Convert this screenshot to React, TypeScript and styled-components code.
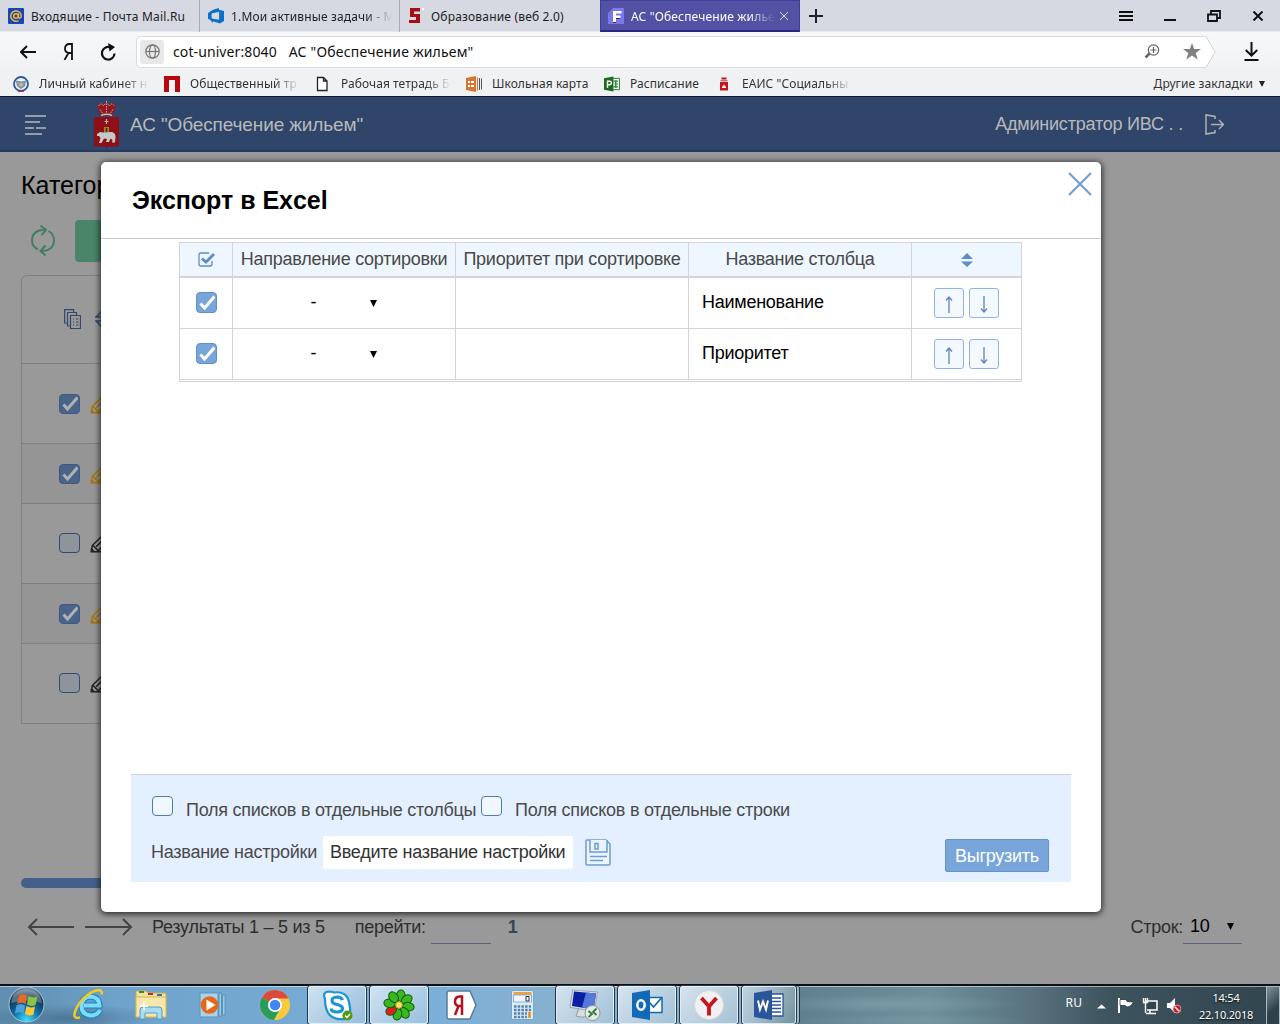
import React from "react";
import styled, { createGlobalStyle, css } from "styled-components";

const UI = `"Noto Sans", "Open Sans", sans-serif`;
const APP = `"Liberation Sans", Arial, sans-serif`;

const GlobalStyle = createGlobalStyle`
  * { box-sizing: border-box; }
  html, body { margin: 0; padding: 0; }
  body { width: 1280px; height: 1024px; overflow: hidden; background: #999; font-family: ${APP}; }
  svg { display: block; flex: none; }
`;

const Screen = styled.div`
  display: flex;
  flex-direction: column;
  width: 1280px;
  height: 1024px;
  overflow: hidden;
`;

const Label = styled.span<{ $size?: number; $ls?: number; $w?: number; $color?: string; $fade?: boolean; $weight?: number }>`
  display: block;
  flex: none;
  white-space: nowrap;
  font-size: ${(p) => p.$size ?? 18}px;
  letter-spacing: ${(p) => p.$ls ?? (p.$size ? 0.1 : -0.26)}px;
  font-weight: ${(p) => p.$weight ?? 400};
  color: ${(p) => p.$color ?? "inherit"};
  ${(p) => p.$w && css`width: ${p.$w}px; overflow: hidden;`}
  ${(p) => p.$fade && css`mask-image: linear-gradient(to right, #000 calc(100% - 26px), transparent);`}
`;

/* ---------- browser chrome ---------- */

const TabStrip = styled.div`
  display: flex;
  flex: none;
  height: 32px;
  background: #d6d9e2;
  border-bottom: 1px solid #e6e8ee;
  font-family: ${UI};
  color: #222;
`;

const Tab = styled.div<{ $active?: boolean; $last?: boolean }>`
  display: flex;
  align-items: center;
  flex: none;
  width: 200px;
  height: 32px;
  padding-left: 8px;
  gap: 7px;
  border-right: 1px solid ${(p) => (p.$last || p.$active ? "transparent" : "#a9abb2")};
  ${(p) => p.$active && css`
    background: #5351a3;
    border: 1px solid #403e98;
    border-bottom: 2px solid #2a2684;
    color: #fff;
    padding-top: 1px;
    padding-left: 7px;
  `}
`;

const NewTab = styled.div`
  display: flex;
  align-items: center;
  width: 304px;
  padding-left: 9px;
`;

const WindowButton = styled.div`
  display: flex;
  align-items: center;
  justify-content: center;
  width: 44px;
`;

const AddressRow = styled.div`
  display: flex;
  align-items: center;
  flex: none;
  height: 39px;
  background: linear-gradient(#f7f8fa, #f1f2f4);
  font-family: ${UI};
`;

const NavButton = styled.div`
  display: flex;
  align-items: center;
  justify-content: center;
  width: 40px;
`;

const NavButtons = styled.div`
  display: flex;
  width: 136px;
  padding-left: 8px;
`;

const Omnibox = styled.div`
  display: flex;
  align-items: center;
  width: 1070px;
  height: 32px;
  padding-left: 3px;
  background: #fff;
  border: 1px solid #d9dbde;
  border-right: 0;
  border-radius: 5px 0 0 5px;
  color: #111;
`;

const SiteBadge = styled.div`
  display: flex;
  align-items: center;
  justify-content: center;
  width: 24px;
  height: 24px;
  margin-right: 9px;
  border-radius: 3px;
  background: #e8e8e8;
`;

const UrlText = styled.div`
  display: flex;
  gap: 12px;
  flex: 1;
`;

const OmniActions = styled.div`
  display: flex;
  align-items: center;
  gap: 23px;
  margin-right: 5px;
`;

const Download = styled.div`
  padding-left: 28px;
`;

const BookmarkRow = styled.div`
  display: flex;
  align-items: center;
  flex: none;
  height: 26px;
  padding: 0 15px 0 13px;
  background: #f0f1f3;
  border-bottom: 1px solid #101a33;
  font-family: ${UI};
  color: #333;
`;

const Bookmark = styled.div`
  display: flex;
  align-items: center;
  gap: 10px;
  margin-right: 15px;
`;

const OtherBookmarks = styled.div`
  display: flex;
  align-items: center;
  gap: 6px;
  margin-left: auto;
`;

/* ---------- page ---------- */

const Page = styled.main`
  position: relative;
  flex: none;
  height: 887px;
  background: #999;
  overflow: hidden;
`;

const AppHeader = styled.header`
  display: flex;
  align-items: center;
  height: 55px;
  padding: 2px 56px 0 25px;
  background: #2f456a;
  border-bottom: 2px solid #243b60;
  color: #b9b9b9;
`;

const AppName = styled.div`
  margin-left: 10px;
`;

const MenuSlot = styled.div`
  width: 68px;
`;

const UserArea = styled.div`
  display: flex;
  align-items: center;
  gap: 22px;
  margin-left: auto;
`;

const Content = styled.div`
  padding: 19px 0 0 21px;
`;

const PageTitle = styled.h1`
  margin: 0;
  font-size: 25px;
  line-height: 29px;
  font-weight: 400;
  color: #000;
`;

const Toolbar = styled.div`
  display: flex;
  align-items: center;
  gap: 19px;
  height: 42px;
  margin-top: 20px;
  padding-left: 9px;
`;

const GreenButton = styled.div`
  width: 200px;
  height: 42px;
  border-radius: 4px;
  background: #4a8569;
`;

const BackTable = styled.div`
  width: 1060px;
  margin-top: 13px;
  border: 1px solid #7f7f7f;
  border-radius: 6px 0 0 0;
`;

const BackRow = styled.div<{ $h: number; $alt?: boolean; $lift?: boolean }>`
  display: flex;
  align-items: center;
  gap: 10px;
  height: ${(p) => p.$h}px;
  padding-left: 37px;
  padding-bottom: ${(p) => (p.$lift ? 2 : 0)}px;
  border-bottom: 1px solid #7f7f7f;
  background: ${(p) => (p.$alt ? "#959595" : "transparent")};
  &:last-child { border-bottom: 0; }
`;

const BackHeadRow = styled(BackRow)`
  padding-left: 42px;
  gap: 14px;
`;

const ScrollThumb = styled.div`
  width: 1060px;
  height: 10px;
  margin-top: 154px;
  border-radius: 5px;
  background: #44608a;
`;

const Pager = styled.div`
  display: flex;
  align-items: center;
  height: 34px;
  margin: 22px 38px 0 6px;
  color: #2d2d2d;
`;

const PagerArrows = styled.div`
  display: flex;
  gap: 10px;
  width: 125px;
`;

const Underlined = styled.div<{ $w: number }>`
  display: flex;
  align-items: center;
  justify-content: space-between;
  width: ${(p) => p.$w}px;
  height: 34px;
  padding: 0 8px 0 7px;
  border-bottom: 1px solid #5b6478;
  color: #000;
`;

const GoTo = styled.div`
  display: flex;
  align-items: center;
  gap: 5px;
  margin-left: 30px;
  margin-right: 17px;
`;

const RowsPerPage = styled.div`
  display: flex;
  align-items: center;
  margin-left: auto;
`;

const Check = styled.span<{ $on?: boolean; $dim?: boolean }>`
  display: flex;
  align-items: center;
  justify-content: center;
  flex: none;
  width: 21px;
  height: ${(p) => (p.$dim || !p.$on ? 20 : 21)}px;
  border-radius: 4px;
  border: 1px solid ${(p) => (p.$dim ? (p.$on ? "#3e5a80" : "#334b70") : p.$on ? "#6090c8" : "#4a7db8")};
  background: ${(p) => (p.$on ? (p.$dim ? "#486488" : "#78a5da") : p.$dim ? "#8f939b" : "#f0f7ff")};
  color: ${(p) => (p.$dim ? "#b0b0b0" : "#fff")};
`;

/* ---------- modal ---------- */

const Modal = styled.section`
  position: absolute;
  left: 101px;
  top: 65px;
  display: flex;
  flex-direction: column;
  width: 1000px;
  height: 750px;
  border-radius: 5px;
  background: #fff;
  box-shadow: 0 1px 6px 1px rgba(0, 0, 0, 0.75);
`;

const ModalHead = styled.div`
  display: flex;
  justify-content: space-between;
  flex: none;
  height: 77px;
  padding: 10px 9px 0 31px;
  border-bottom: 1px solid #ccc;
`;

const ModalTitle = styled.h2`
  margin: 13px 0 0;
  font-size: 25px;
  line-height: 30px;
  font-weight: 700;
  letter-spacing: -0.03px;
  color: #000;
`;

const Grid = styled.div`
  flex: none;
  width: 843px;
  margin: 3px 0 0 78px;
  border: 1px solid #d4d4d4;
`;

const GridRow = styled.div<{ $head?: boolean }>`
  display: grid;
  grid-template-columns: 53px 223px 233px 223px 109px;
  height: ${(p) => (p.$head ? 35 : 51)}px;
  border-bottom: ${(p) => (p.$head ? 2 : 1)}px solid #d4d4d4;
  background: ${(p) => (p.$head ? "#eef7ff" : "#fff")};
  color: ${(p) => (p.$head ? "#484848" : "#000")};
  &:last-child { margin-bottom: 1px; }
`;

const Cell = styled.div<{ $left?: boolean; $lift?: number }>`
  display: flex;
  align-items: center;
  justify-content: ${(p) => (p.$left ? "flex-start" : "center")};
  gap: 5px;
  padding-left: ${(p) => (p.$left ? 13 : 0)}px;
  padding-bottom: ${(p) => p.$lift ?? 0}px;
  border-right: 1px solid #d4d4d4;
  &:last-child { border-right: 0; }
`;

const SortSelect = styled.div`
  display: flex;
  align-items: center;
  justify-content: space-between;
  width: 66px;
  margin-right: 1px;
  svg { margin-top: 2px; }
`;

const ArrowButton = styled.button`
  display: flex;
  align-items: center;
  justify-content: center;
  width: 30px;
  height: 30px;
  padding: 3px 0 0;
  margin: 0;
  border: 1px solid #8fb3e2;
  border-radius: 3px;
  background: #f4f9ff;
  color: #5d84bb;
`;

const Footer = styled.div`
  flex: none;
  width: 940px;
  height: 108px;
  margin: auto 0 30px 30px;
  padding: 21px 22px 0 20px;
  border-top: 1px solid #cfd3d8;
  background: #e4f0ff;
  color: #4a4a4a;
`;

const OptionRow = styled.div`
  display: flex;
  height: 31px;
  padding-left: 1px;
`;

const OptionText = styled.div<{ $w: number }>`
  width: ${(p) => p.$w}px;
  margin-left: 13px;
  padding-top: 4px;
`;

const SaveRow = styled.div`
  display: flex;
  align-items: center;
  height: 50px;
`;

const NameInput = styled.div`
  display: flex;
  align-items: center;
  width: 250px;
  height: 33px;
  margin: 0 12px 0 6px;
  padding-left: 7px;
  background: #fff;
  color: #333;
`;

const ExportButton = styled.button`
  width: 104px;
  height: 33px;
  margin: 6px 0 0 auto;
  padding: 2px 0 0;
  border: 1px solid #6492cb;
  border-radius: 2px;
  background: #78a5da;
  color: #fff;
  font: 18px ${APP};
  letter-spacing: -0.26px;
`;

/* ---------- taskbar ---------- */

const Taskbar = styled.footer`
  display: flex;
  flex: none;
  height: 41px;
  border-top: 2px solid #0b1118;
  background:
    linear-gradient(rgba(255, 255, 255, 0.5) 0 1px, transparent 1px),
    radial-gradient(ellipse 90px 14px at 70px 32px, rgba(45, 75, 100, 0.45), transparent),
    radial-gradient(ellipse 130px 10px at 890px 18px, rgba(140, 170, 180, 0.5), transparent),
    radial-gradient(ellipse 120px 8px at 910px 35px, rgba(130, 165, 175, 0.4), transparent),
    linear-gradient(to right, #5f8eae 0, #6fa3cb 120px, #7bafd8 430px, #86b0cf 540px, #8db0c8 740px, #5f818f 800px, #6d8f9b 930px, #59737f 1030px, #3d535e 1110px, #31454f 1280px);
  font-family: ${UI};
`;

const StartSlot = styled.div`
  width: 58px;
  padding: 0 0 0 8px;
`;

const Task = styled.div<{ $open?: boolean; $stack?: boolean }>`
  display: flex;
  align-items: center;
  justify-content: center;
  flex: none;
  width: 58px;
  height: 38px;
  margin: 0 2px;
  ${(p) => p.$open && css`
    border: 1px solid rgba(235, 245, 252, 0.8);
    border-radius: 3px;
    box-shadow: 0 0 0 1px #23394b;
    background: linear-gradient(135deg, rgba(255, 255, 255, 0.65), rgba(255, 255, 255, 0.22));
  `}
  ${(p) => p.$stack && css`
    width: 54px;
    background: linear-gradient(135deg, rgba(255, 255, 255, 0.45), rgba(255, 255, 255, 0.1));
    box-shadow: 0 0 0 1px #23394b, 3px 0 0 0 #9fb9c4, 4px 0 0 0 #23394b;
  `}
`;

const Tray = styled.div`
  display: flex;
  align-items: center;
  flex: 1;
  justify-content: flex-end;
  color: #fff;
`;

const Language = styled.div`
  margin: -7px 15px 0 0;
`;

const Clock = styled.div`
  display: flex;
  flex-direction: column;
  align-items: center;
  width: 56px;
  margin: 0 12px 0 17px;
  line-height: 17px;
  text-shadow: 0 1px 2px #000;
`;

const ShowDesktop = styled.div`
  width: 14px;
  height: 39px;
  border: 1px solid #a9bac2;
  background: linear-gradient(135deg, #7f919a, #2f4149 60%);
`;

/* ---------- icons ---------- */

const Tick = () => (
  <svg width="17" height="17" viewBox="0 0 17 17" fill="none" stroke="currentColor" strokeWidth="3">
    <path d="M2.500 9.500l4 4.500L16.500 2.500" />
  </svg>
);

const Caret = ({ color = "#000" }: { color?: string }) => (
  <svg width="7" height="7" viewBox="0 0 7 7"><path d="M0 0h7L3.500 7z" fill={color} /></svg>
);

const MailIcon = () => (
  <svg width="16" height="16" viewBox="0 0 16 16">
    <rect width="16" height="16" rx="1" fill="#1646b8" />
    <g fill="none" stroke="#f7b52c" strokeWidth="1.5">
      <circle cx="8" cy="8" r="2.3" />
      <path d="M10.4 5.6v3.2c0 2 2.8 1.8 2.8-.9A5.2 5.2 0 1 0 10.6 12.6" />
    </g>
  </svg>
);

const DevopsIcon = () => (
  <svg width="16" height="16" viewBox="0 0 16 16">
    <path d="M0 5l5-3.2L11 0v1.7L16 3v10l-4 2.5L5 13.2V15L1.5 11.3 0 11zM3.6 5.5v5l7.5 1.2V3.8z" fill="#0b6fc8" fillRule="evenodd" />
  </svg>
);

const FiveIcon = () => (
  <svg width="16" height="16" viewBox="0 0 16 16">
    <path d="M2 0h10v3.500H6V6h6v9H1v-3h7V9H2z" fill="#a50f14" />
    <path d="M14 0h2v2h-2z" fill="#fff" />
  </svg>
);

const FIcon = () => (
  <svg width="16" height="16" viewBox="0 0 16 16">
    <path d="M5 0h11v16H0V5z" fill="#7b78ee" />
    <path d="M5 3h8.500v2.600H8v2h4.500V10H8v4H5z" fill="#fff" />
    <path d="M5 14.500h3M8 10.500h4" stroke="#333" />
  </svg>
);

const EmblemIcon = () => (
  <svg width="16" height="16" viewBox="0 0 16 16">
    <circle cx="8" cy="8" r="7" fill="#eef2f6" stroke="#2c5c92" strokeWidth="1.800" />
    <path d="M3.500 5l4.500 1 4.500-1-.8 5L8 12.500 4.300 10z" fill="#8ba0b4" stroke="#5d7790" strokeWidth=".7" />
    <circle cx="8" cy="8.500" r="1.700" fill="#d9b27c" />
    <path d="M5 15.200h6" stroke="#b12a34" strokeWidth="1.200" />
  </svg>
);

const GateIcon = () => (
  <svg width="16" height="16" viewBox="0 0 16 16"><path d="M0 0h16v16h-5V4H5v12H0z" fill="#b8070e" /></svg>
);

const FileIcon = () => (
  <svg width="16" height="16" viewBox="0 0 16 16" fill="#fff" stroke="#222" strokeWidth="1.300">
    <path d="M2.500 1.500h6l3.500 3.500v9.500H2.500zM8.500 1.500V5H12" />
  </svg>
);

const OrangeIcon = () => (
  <svg width="16" height="16" viewBox="0 0 16 16">
    <path d="M0 2l10-2v16L0 14z" fill="#d87431" />
    <path d="M2 6h2M5 6h3M2 10h2M5 10h3" stroke="#fff" strokeWidth="2" />
    <path d="M11.500 1.500v13" stroke="#d87431" /><path d="M13.500 2v12M15.500 2.500v11" stroke="#555" />
  </svg>
);

const ProjectIcon = () => (
  <svg width="16" height="16" viewBox="0 0 17 16">
    <path d="M8 2h8.500v12H8z" fill="#fff" stroke="#257a2c" />
    <path d="M10 5h5M11 8h4M10 11h5M12.500 4v8" stroke="#257a2c" strokeWidth="1.300" />
    <path d="M0 2l10-2v16L0 14z" fill="#1d6b22" />
    <path d="M3.700 12V5H6c2.500 0 2.500 3.800 0 3.800H4" fill="none" stroke="#fff" strokeWidth="1.500" />
  </svg>
);

const ArmsSmallIcon = () => (
  <svg width="16" height="16" viewBox="-2 0 16 16">
    <path d="M3.500 2.500h5" stroke="#c5151b" strokeWidth="2" /><path d="M2.500 4.800h7" stroke="#8d4a42" />
    <path d="M2 6h8v8.500H2z" fill="#c5151b" /><path d="M4 11l2-2.500L8 11v1H4z" fill="#fff" />
  </svg>
);

const ArmsIcon = () => (
  <svg width="27" height="49" viewBox="0 0 27 49">
    <path d="M1 17h25v28.500q0 1-2 1H15L13.500 49 12 46.500H3q-2 0-2-1z" fill="#8f0f19" />
    <path d="M7 15L5.500 9Q3 4.500 6.500 3.500 10 3 11 5q1-3.500 2.500-3.500T16 5q1-2 4.500-1.500T21.500 9L20 15z" fill="#941722" />
    <path d="M5.500 6q3-4 5 0l3-3.500 3 3.500q2-4 5 0M7 9.500l3 4.500M20 9.500L17 14M13.500 1v12" stroke="#b9a9a0" fill="none" strokeDasharray="1.500 1" />
    <path d="M8 15.500q5.500-2.500 11 0" stroke="#c8b7aa" strokeWidth="1.500" fill="none" />
    <path d="M13.500 19v5M11.500 21.500h4" stroke="#c2a7a4" strokeWidth="1.200" />
    <path d="M11 27h5v7h-5z" fill="#a8801c" /><path d="M13.500 28v5" stroke="#3a2a10" strokeWidth="1.500" />
    <path d="M4 34l3-2 3 .5 9-.5q3.500 1 3.500 5l-.5 5.500h-3l.5-2.500-2-1.500-1.500 3.500H13l1-3-3-.500L8.500 43H6l1.500-5-1.500-2H4z" fill="#c6c8c6" />
  </svg>
);

const PencilIcon = ({ color }: { color: string }) => (
  <svg width="20" height="20" viewBox="0 0 20 20" fill="none" stroke={color} strokeWidth="1.500">
    <path d="M.5 18.800h18.500M1.500 18L2.300 12.500 12.500 2.500 18 8 8 18M3 12.500l5 5M6 13.800L14 6" />
    <path d="M1 16l2.500 2.500" strokeWidth="2.200" />
  </svg>
);

const SheetsIcon = () => (
  <svg width="17" height="20" viewBox="0 0 17 20" fill="none" stroke="#33496e" strokeWidth="1.200">
    <path d="M3 14H.6V.6h9v2.500M6 17H3.500V3.500h9V6M6.500 6.500h10v13h-10zM9 10h1M12 10h2.500M9 13h1M12 13h2.500M9 16h1M12 16h2.500" />
  </svg>
);

const RefreshIcon = () => (
  <svg width="26" height="33" viewBox="0 0 26 33" fill="none" stroke="#3f7d62" strokeWidth="1.900">
    <path d="M8 24.500Q2 21.500 2 15.500 2 8 9 5.500 11 4.700 15.500 5M10.500.8L16 5l-4.500 5.200" />
    <path d="M18.500 6Q24 9 24 15.500 24 22.500 17.500 25.200q-2 .800-6.500.600M15.500 20.500L10.500 26l5 4.500" />
  </svg>
);

const DiskIcon = () => (
  <svg width="26" height="27" viewBox="0 0 26 27" fill="#eaf4ff" stroke="#6f9bd0" strokeWidth="1.500">
    <path d="M1 2Q1 1 2 1h19l4 4v20q0 1-1 1H2q-1 0-1-1z" />
    <path d="M5 1v12h17V1M10 4.500h3v5.500h-3zM5 17.500h17M5 21.500h13" />
  </svg>
);

/* ---------- taskbar icons ---------- */

const StartIcon = () => (
  <svg width="37" height="37" viewBox="0 0 37 37">
    <defs>
      <radialGradient id="orb" cx=".5" cy=".95" r=".95">
        <stop offset="0" stopColor="#42e0ff" /><stop offset=".4" stopColor="#0f6fa8" /><stop offset=".75" stopColor="#12334f" /><stop offset="1" stopColor="#7b97ad" />
      </radialGradient>
    </defs>
    <circle cx="18.500" cy="18.500" r="17.500" fill="url(#orb)" stroke="#a8c3d4" />
    <path d="M3 17Q5 4 18.500 3 32 4 34 17q-15-5-31 0z" fill="#fff" opacity=".28" />
    <path d="M11 9.500q4-2.500 8 0L17.500 18q-4-2.500-8.500 0z" fill="#e8672a" />
    <path d="M20.500 10q4 2.500 9 .5L27.500 19q-4.500 2-8.500-.5z" fill="#8cc540" />
    <path d="M8.500 19.500q4-2.500 8.500 0l-1.500 8q-4-2.500-8.500 0z" fill="#4aa3e0" />
    <path d="M18.500 20q4 2.500 8.500 .5l-1.500 8q-4.500 2-8.500-.5z" fill="#fcc92e" />
  </svg>
);

const IeIcon = () => (
  <svg width="32" height="32" viewBox="0 0 32 32" fill="none">
    <path d="M27 21Q24.500 26.500 17.500 26.500 8.500 25.500 8.500 17 9 8 17.500 7.500 26 8 26.500 16.500H11" stroke="#1583c5" strokeWidth="6" />
    <path d="M27 21Q24.500 26.500 17.500 26.500 8.500 25.500 8.500 17 9 8 17.500 7.500 26 8 26.500 16.500H11" stroke="#7ddcfb" strokeWidth="4" />
    <path d="M7 28.500Q-2 31 3.500 19 10 6 23 1.500q7-1.500 5.500 4" stroke="#f3c81f" strokeWidth="2.600" />
  </svg>
);

const ExplorerIcon = () => (
  <svg width="34" height="32" viewBox="0 0 34 32">
    <path d="M2 2h10l2 2h18v24H2z" fill="#f4e29a" stroke="#c8a94f" />
    <path d="M5 2h5v2H5z" fill="#2f8f2c" /><path d="M14 4h5v2h-5z" fill="#c02b26" /><path d="M23 5h5v2h-5z" fill="#2b72c0" />
    <path d="M2 8h30v20H2z" fill="#f7e7a8" stroke="#d2b65e" />
    <path d="M6 30v-9q0-3 3-3h16q3 0 3 3v9h-5v-6H11v6z" fill="#a8dcf3" stroke="#559fc5" />
    <path d="M10 12v9M6 17h8" stroke="#fff" strokeWidth="1.500" />
  </svg>
);

const MediaIcon = () => (
  <svg width="28" height="26" viewBox="0 0 28 26">
    <path d="M1 1h18v24H1z" fill="#a9d3ea" stroke="#5b95b8" />
    <path d="M20 1h2.500v23H20zM23.500 3H26v20h-2.500z" fill="#9ccce4" stroke="#4f8bb0" strokeWidth=".8" />
    <circle cx="10.500" cy="13" r="8.800" fill="#e8661a" /><path d="M7.500 7.500l9 5.500-9 5.500z" fill="#fff" />
  </svg>
);

const ChromeIcon = () => (
  <svg width="30" height="30" viewBox="0 0 30 30">
    <circle cx="15" cy="15" r="15" fill="#f9cb3c" />
    <path d="M15 15L2 7.500A15 15 0 0 0 14 30l6.500-12z" fill="#279d5a" />
    <path d="M15 15L2 7.500A15 15 0 0 1 28.500 8.500H15z" fill="#dc4a3d" />
    <circle cx="15" cy="15" r="7" fill="#fff" /><circle cx="15" cy="15" r="5.300" fill="#4285f4" />
  </svg>
);

const SkypeIcon = () => (
  <svg width="31" height="31" viewBox="0 0 31 31">
    <path d="M3 9Q0 2 7 1.500q3 0 5 1 14-2 15.500 12.500 1 4 .5 8-1 7-8 6-14 1-16.500-13.500Q3 11 3 9z" fill="#fff" stroke="#1a95d6" strokeWidth="2.200" />
    <path d="M20.500 10q-1-3-5.500-3-5 .2-5 3.500 0 3 5 4t5.500 3.800Q20.500 22 15 22t-6-3.500" fill="none" stroke="#1a95d6" strokeWidth="3.200" />
    <circle cx="25.500" cy="25.500" r="5" fill="#56980f" /><path d="M23 25.500l2 2 3-3.500" fill="none" stroke="#fff" strokeWidth="1.200" />
  </svg>
);

const FlowerIcon = () => (
  <svg width="32" height="32" viewBox="0 0 32 32" stroke="#0d5c0b">
    {[0, 45, 90, 135, 180, 225, 270, 315].map((a) => (
      <ellipse key={a} cx="16" cy="6.500" rx="4.300" ry="5.800" fill={a === 225 ? "#e02020" : "#39b81f"} transform={`rotate(${a + 10} 16 16)`} />
    ))}
    <circle cx="16" cy="16" r="3.300" fill="#fbe26a" stroke="#c3a21b" />
  </svg>
);

const YandexIcon = () => (
  <svg width="31" height="30" viewBox="0 0 31 30">
    <path d="M3 1h21l6 14-6 14H3q-2 0-2-2V3q0-2 2-2z" fill="#fff" stroke="#5a7c97" strokeWidth="1.500" />
    <path d="M16 25V6.500h-2.500q-4.500 .5-4.500 5 0 4.500 4.500 4.500H16M12.500 16L9 25" fill="none" stroke="#b51220" strokeWidth="2.500" />
  </svg>
);

const CalcIcon = () => (
  <svg width="24" height="30" viewBox="0 0 24 30">
    <rect x=".5" y=".5" width="22" height="29" rx="1.500" fill="#dcecf8" stroke="#7ba5c5" />
    <path d="M2.500 2h18v3h-18z" fill="#eda23d" /><path d="M2.500 5h18v7h-18z" fill="#eef7ff" stroke="#8eb0ca" />
    <path d="M15 6.500h3V11h-3z" fill="none" stroke="#333" />
    <path d="M3 16.500h17M3 20h17M3 23.500h13M3 27h13" stroke="#5282aa" strokeWidth="2.300" strokeDasharray="2.500 1.200" />
    <path d="M18.500 22v6" stroke="#e58b25" strokeWidth="2.500" />
  </svg>
);

const RemoteIcon = () => (
  <svg width="32" height="32" viewBox="0 0 32 32">
    <path d="M10 19h10l2 6q-6 5-15 2z" fill="#d9dde0" stroke="#909aa0" />
    <path d="M3.500 1l25 2-3 19L1 18.500z" fill="#d8dfe8" stroke="#9aa7b3" />
    <path d="M5 2.500l22 2-2.500 16L3 17z" fill="#0b1fa3" /><path d="M17 3.600l10 .9-2.500 16L13 18.500z" fill="#5678dc" />
    <circle cx="23.500" cy="24" r="7.500" fill="#e7e9e9" stroke="#8f9696" />
    <path d="M19.500 22l3.500 3-3.500 3M27.500 19.500L24 23l3.500 3" fill="none" stroke="#2f7e3a" strokeWidth="1.800" />
  </svg>
);

const OutlookIcon = () => (
  <svg width="31" height="30" viewBox="0 0 31 30">
    <path d="M14 7.500h16v15H14z" fill="#fff" stroke="#1269b5" strokeWidth="1.500" /><path d="M17 12l4.500 5 8-9" fill="none" stroke="#1269b5" strokeWidth="1.800" />
    <path d="M0 3l18-3v30L0 27z" fill="#1269b5" /><ellipse cx="9" cy="15" rx="3.700" ry="4.700" fill="none" stroke="#fff" strokeWidth="2.500" />
  </svg>
);

const YBrowserIcon = () => (
  <svg width="30" height="30" viewBox="0 0 30 30">
    <circle cx="15" cy="15" r="14.500" fill="#f1f1f1" stroke="#d4d8db" /><path d="M7.500 8L15 16.500 22.500 8M15 16v9.500" fill="none" stroke="#c4161c" strokeWidth="3.800" />
  </svg>
);

const WordIcon = () => (
  <svg width="30" height="30" viewBox="0 0 30 30">
    <path d="M15 4h14v22H15z" fill="#fff" stroke="#2a5699" strokeWidth="1.300" /><path d="M18 8h9M18 11.500h9M18 15h9M18 18.500h9M18 22h9" stroke="#2a5699" strokeWidth="1.500" />
    <path d="M0 3l18-3v30L0 27z" fill="#2a5699" /><path d="M4 10.500l2 9 3-8 3 8 2-9" fill="none" stroke="#fff" strokeWidth="2" />
  </svg>
);

const TrayIcons = () => (
  <svg width="84" height="24" viewBox="0 0 84 24">
    <path d="M0 14.500l4.500-4L9 14.500z" fill="#fff" />
    <path d="M22 4v15" stroke="#fff" strokeWidth="2" /><path d="M23 5.500h6l1 2 6.500 .500q-2.500 5-6.500 5l-2-1.500h-5z" fill="#fff" stroke="#17232b" strokeWidth=".7" />
    <path d="M48.500 7H60v9H50M53 16.500v3M49 19.500h10" fill="#32444d" stroke="#fff" strokeWidth="1.500" /><path d="M46.500 4v4.500h4V4M48.500 8v11M48.500 4v4" fill="none" stroke="#fff" strokeWidth="1.400" />
    <path d="M70 9h3l5-5v15l-5-5h-3z" fill="#fff" />
    <circle cx="80" cy="15" r="4" fill="#d3161c" stroke="#fff" strokeWidth=".5" /><path d="M77.800 12.800l4.400 4.400" stroke="#fff" strokeWidth="1.500" />
  </svg>
);

/* ---------- data ---------- */

const bookmarks = [
  { icon: <EmblemIcon />, text: "Личный кабинет н", width: 110, fade: true },
  { icon: <GateIcon />, text: "Общественный тр", width: 110, fade: true },
  { icon: <FileIcon />, text: "Рабочая тетрадь Б", width: 110, fade: true },
  { icon: <OrangeIcon />, text: "Школьная карта", width: 97 },
  { icon: <ProjectIcon />, text: "Расписание", width: 71 },
  { icon: <ArmsSmallIcon />, text: "ЕАИС \"Социальны", width: 110, fade: true },
];

const backRows = [
  { h: 80, on: true },
  { h: 60, on: true },
  { h: 80, on: false },
  { h: 60, on: true },
  { h: 79, on: false },
];

const tasks = [
  { icon: <IeIcon /> }, { icon: <ExplorerIcon /> }, { icon: <MediaIcon /> }, { icon: <ChromeIcon /> },
  { icon: <SkypeIcon />, open: true }, { icon: <FlowerIcon />, open: true },
  { icon: <YandexIcon /> }, { icon: <CalcIcon /> },
  { icon: <RemoteIcon />, open: true }, { icon: <OutlookIcon />, open: true },
  { icon: <YBrowserIcon />, open: true }, { icon: <WordIcon />, open: true, stack: true },
];

const BrowserChrome = () => (
  <>
    <TabStrip>
      <Tab><MailIcon /><Label $size={12} $ls={0.18}>Входящие - Почта Mail.Ru</Label></Tab>
      <Tab><DevopsIcon /><Label $size={12} $w={161} $ls={0.15} $fade>1.Мои активные задачи - М</Label></Tab>
      <Tab $last><FiveIcon /><Label $size={12} $ls={0.18}>Образование (веб 2.0)</Label></Tab>
      <Tab $active>
        <FIcon /><Label $size={12} $w={144} $ls={0.15} $fade>АС "Обеспечение жилье</Label>
        <svg width="8" height="8" viewBox="0 0 8 8" stroke="#dcdcf2" style={{ marginLeft: -2 }}><path d="M0 0l8 8M8 0L0 8" /></svg>
      </Tab>
      <NewTab><svg width="14" height="14" viewBox="0 0 14 14" stroke="#222" strokeWidth="2"><path d="M7 0v14M0 7h14" /></svg></NewTab>
      <WindowButton><svg width="14" height="10" viewBox="0 0 14 10" stroke="#111" strokeWidth="2"><path d="M0 1h14M0 5h14M0 9h14" /></svg></WindowButton>
      <WindowButton><svg width="12" height="10" viewBox="0 0 12 10" stroke="#111" strokeWidth="2"><path d="M0 9h12" /></svg></WindowButton>
      <WindowButton><svg width="14" height="12" viewBox="0 0 14 12" fill="none" stroke="#111" strokeWidth="1.800"><path d="M1 4.500h9v6.500H1zM4 4V1h9v7h-3" /></svg></WindowButton>
      <WindowButton><svg width="10" height="10" viewBox="0 0 10 10" stroke="#111" strokeWidth="2"><path d="M.5.5l9 9M9.500.5l-9 9" /></svg></WindowButton>
    </TabStrip>
    <AddressRow>
      <NavButtons>
        <NavButton><svg width="16" height="14" viewBox="0 0 16 14" fill="none" stroke="#111" strokeWidth="2"><path d="M16 7H1M7 1L1 7l6 6" /></svg></NavButton>
        <NavButton><svg width="11" height="17" viewBox="0 0 11 17" fill="none" stroke="#111" strokeWidth="1.800"><path d="M9 17V1H6.500Q2 1 2 5.500T6.500 10H9M5.500 10L1.500 17" /></svg></NavButton>
        <NavButton><svg width="16" height="18" viewBox="0 0 16 18" fill="none" stroke="#111" strokeWidth="2.200"><path d="M14.500 10.500A6.300 6.300 0 1 1 10 4.200" /><path d="M8 0l7 4-5.500 4.500z" fill="#111" stroke="none" /></svg></NavButton>
      </NavButtons>
      <Omnibox>
        <SiteBadge><svg width="15" height="15" viewBox="0 0 15 15" fill="none" stroke="#777" strokeWidth="1.200"><circle cx="7.500" cy="7.500" r="6.700" /><ellipse cx="7.500" cy="7.500" rx="3" ry="6.700" /><path d="M1 7.500h13" /></svg></SiteBadge>
        <UrlText><Label $size={14}>cot-univer:8040</Label><Label $size={14} $ls={0.18}>АС "Обеспечение жильем"</Label></UrlText>
        <OmniActions>
          <svg width="16" height="15" viewBox="0 0 16 15" fill="none" stroke="#666" strokeWidth="1.200"><circle cx="9.500" cy="6" r="5.200" /><path d="M9.500 3v6M6.500 6h6" /><path d="M5.500 9.500L1.500 13.500" strokeWidth="2.500" /></svg>
          <svg width="18" height="17" viewBox="0 0 18 17"><path d="M9 0l2.100 6H18l-5.300 4 2 6.500L9 12.600 3.300 16.500l2-6.500L0 6h6.900z" fill="#808080" /></svg>
        </OmniActions>
      </Omnibox>
      <svg width="10" height="32" viewBox="0 0 10 32"><path d="M0 .5L9 16 0 31.500" fill="#fff" stroke="#d0d2d6" /></svg>
      <Download><svg width="15" height="19" viewBox="0 0 15 19" fill="none" stroke="#111" strokeWidth="2"><path d="M7.500 0v13M1.800 8l5.700 5.700L13.200 8M.5 18h14" /></svg></Download>
    </AddressRow>
    <BookmarkRow>
      {bookmarks.map((b) => (
        <Bookmark key={b.text}>{b.icon}<Label $size={12} $ls={0.06} $w={b.width} $fade={b.fade}>{b.text}</Label></Bookmark>
      ))}
      <OtherBookmarks><Label $size={12}>Другие закладки</Label><svg width="6" height="6" viewBox="0 0 6 6"><path d="M0 0h6L3 6z" fill="#222" /></svg></OtherBookmarks>
    </BookmarkRow>
  </>
);

const ExportModal = () => (
  <Modal>
    <ModalHead>
      <ModalTitle>Экспорт в Excel</ModalTitle>
      <svg width="24" height="24" viewBox="0 0 24 24" stroke="#7199cf" strokeWidth="2"><path d="M1 1l22 22M23 1L1 23" /></svg>
    </ModalHead>
    <Grid>
      <GridRow $head>
        <Cell>
          <svg width="17" height="15" viewBox="0 0 17 15" fill="none" stroke="#5d8cc6"><path d="M11 1H3Q1 1 1 3v9q0 2 2 2h9q2 0 2-2V9" strokeWidth="1.300" /><path d="M4 6.500l4 3.500 8-8" strokeWidth="2.800" /></svg>
        </Cell>
        <Cell><Label>Направление сортировки</Label></Cell>
        <Cell><Label>Приоритет при сортировке</Label></Cell>
        <Cell><Label>Название столбца</Label></Cell>
        <Cell><svg width="12" height="14" viewBox="0 0 12 14" fill="#5d8cc6"><path d="M0 6l6-6 6 6zM0 8.500h12L6 14z" /></svg></Cell>
      </GridRow>
      {["Наименование", "Приоритет"].map((name) => (
        <GridRow key={name}>
          <Cell $lift={2}><Check $on><Tick /></Check></Cell>
          <Cell $lift={1}><SortSelect><Label>-</Label><Caret /></SortSelect></Cell>
          <Cell />
          <Cell $left $lift={2}><Label>{name}</Label></Cell>
          <Cell>
            <ArrowButton><svg width="8" height="17" viewBox="0 0 8 17" fill="none" stroke="currentColor" strokeWidth="1.300"><path d="M4 17V1M1 4.500L4 1l3 3.500" /></svg></ArrowButton>
            <ArrowButton><svg width="8" height="17" viewBox="0 0 8 17" fill="none" stroke="currentColor" strokeWidth="1.300"><path d="M4 0v16M1 12.500L4 16l3-3.500" /></svg></ArrowButton>
          </Cell>
        </GridRow>
      ))}
    </Grid>
    <Footer>
      <OptionRow>
        <Check />
        <OptionText $w={295}><Label>Поля списков в отдельные столбцы</Label></OptionText>
        <Check />
        <OptionText $w={280}><Label>Поля списков в отдельные строки</Label></OptionText>
      </OptionRow>
      <SaveRow>
        <Label>Название настройки</Label>
        <NameInput><Label>Введите название настройки</Label></NameInput>
        <DiskIcon />
        <ExportButton>Выгрузить</ExportButton>
      </SaveRow>
    </Footer>
  </Modal>
);

export default function App() {
  return (
    <Screen>
      <GlobalStyle />
      <BrowserChrome />
      <Page>
        <AppHeader>
          <MenuSlot><svg width="22" height="20" viewBox="0 0 22 20" stroke="#b9b9b9" strokeWidth="1.500"><path d="M0 1h21M0 7h15M0 13h9M11 13h10M0 19h17" /></svg></MenuSlot>
          <ArmsIcon />
          <AppName><Label $size={19} $ls={-0.12}>АС "Обеспечение жильем"</Label></AppName>
          <UserArea>
            <Label $ls={-0.21}>Администратор ИВС . .</Label>
            <svg width="19" height="21" viewBox="0 0 19 21" fill="none" stroke="#b0b0b0" strokeWidth="1.500"><path d="M10 5V2.500L1 1v19l9-1.500V16M6 10.500h12M14 6l4.500 4.500L14 15" /></svg>
          </UserArea>
        </AppHeader>
        <Content>
          <PageTitle>Категор</PageTitle>
          <Toolbar><RefreshIcon /><GreenButton /></Toolbar>
          <BackTable>
            <BackHeadRow $h={88} $lift>
              <SheetsIcon />
              <svg width="20" height="20" viewBox="0 0 20 20" fill="none" stroke="#33496e" strokeWidth="1.500"><path d="M1 8L8 1h4l7 7zM1 12h18l-7 7H8z" /></svg>
            </BackHeadRow>
            {backRows.map((r, i) => (
              <BackRow key={i} $h={r.h} $alt={i % 2 === 1} $lift={!r.on}>
                <Check $dim $on={r.on}>{r.on && <Tick />}</Check>
                <PencilIcon color={r.on ? "#a87508" : "#222"} />
              </BackRow>
            ))}
          </BackTable>
          <ScrollThumb />
          <Pager>
            <PagerArrows>
              <svg width="48" height="18" viewBox="0 0 48 18" fill="none" stroke="#444" strokeWidth="2"><path d="M47 9H2M10 1L2 9l8 8" /></svg>
              <svg width="48" height="18" viewBox="0 0 48 18" fill="none" stroke="#444" strokeWidth="2"><path d="M0 9h46M38 1l8 8-8 8" /></svg>
            </PagerArrows>
            <Label>Результаты 1 – 5 из 5</Label>
            <GoTo><Label>перейти:</Label><Underlined $w={60} /></GoTo>
            <Label $weight={700} $color="#3c4450">1</Label>
            <RowsPerPage><Label>Строк:</Label><Underlined $w={59}><Label>10</Label><Caret /></Underlined></RowsPerPage>
          </Pager>
        </Content>
        <ExportModal />
      </Page>
      <Taskbar>
        <StartSlot><StartIcon /></StartSlot>
        {tasks.map((t, i) => <Task key={i} $open={t.open} $stack={t.stack}>{t.icon}</Task>)}
        <Tray>
          <Language><Label $size={12}>RU</Label></Language>
          <TrayIcons />
          <Clock><Label $size={11} $ls={-0.2}>14:54</Label><Label $size={11} $ls={-0.2}>22.10.2018</Label></Clock>
          <ShowDesktop />
        </Tray>
      </Taskbar>
    </Screen>
  );
}
